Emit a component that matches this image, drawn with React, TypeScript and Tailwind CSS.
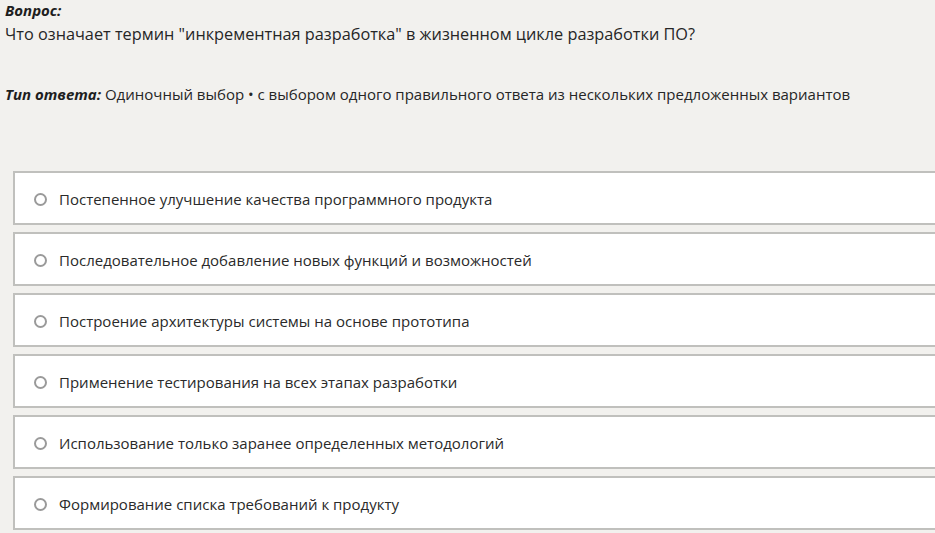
import React from "react";

const options = [
  "Постепенное улучшение качества программного продукта",
  "Последовательное добавление новых функций и возможностей",
  "Построение архитектуры системы на основе прототипа",
  "Применение тестирования на всех этапах разработки",
  "Использование только заранее определенных методологий",
  "Формирование списка требований к продукту",
];

export default function App() {
  return (
    <div
      className="w-[935px] h-[533px] overflow-hidden bg-[#f2f1ee] text-[#262626]"
      style={{ fontFamily: '"Open Sans", "Noto Sans", sans-serif' }}
    >
      <div className="pl-[5px] pt-0">
        <div className="text-[15px] font-bold italic leading-[20px] text-[#1e1e1e]">Вопрос:</div>
        <div className="text-[16.3px] leading-[26px] mt-[1px]">
          Что означает термин "инкрементная разработка" в жизненном цикле разработки ПО?
        </div>
        <div className="mt-[36px] text-[15px] leading-[22px]">
          <span className="font-bold italic text-[#1e1e1e]">Тип ответа:</span>{" "}
          Одиночный выбор • с выбором одного правильного ответа из нескольких предложенных вариантов
        </div>
      </div>
      <div className="mt-[66px] ml-[13px] flex flex-col gap-[7px]">
        {options.map((o) => (
          <div
            key={o}
            className="h-[54px] w-[940px] border-2 border-r-0 border-[#c0c0bd] bg-white flex items-center pl-[19px] pt-[3px]"
          >
            <span className="w-[13px] h-[13px] rounded-full border-2 border-[#9a9a9a] bg-white" />
            <span className="ml-[12px] text-[15px] text-[#2a2a2a]">{o}</span>
          </div>
        ))}
      </div>
    </div>
  );
}
